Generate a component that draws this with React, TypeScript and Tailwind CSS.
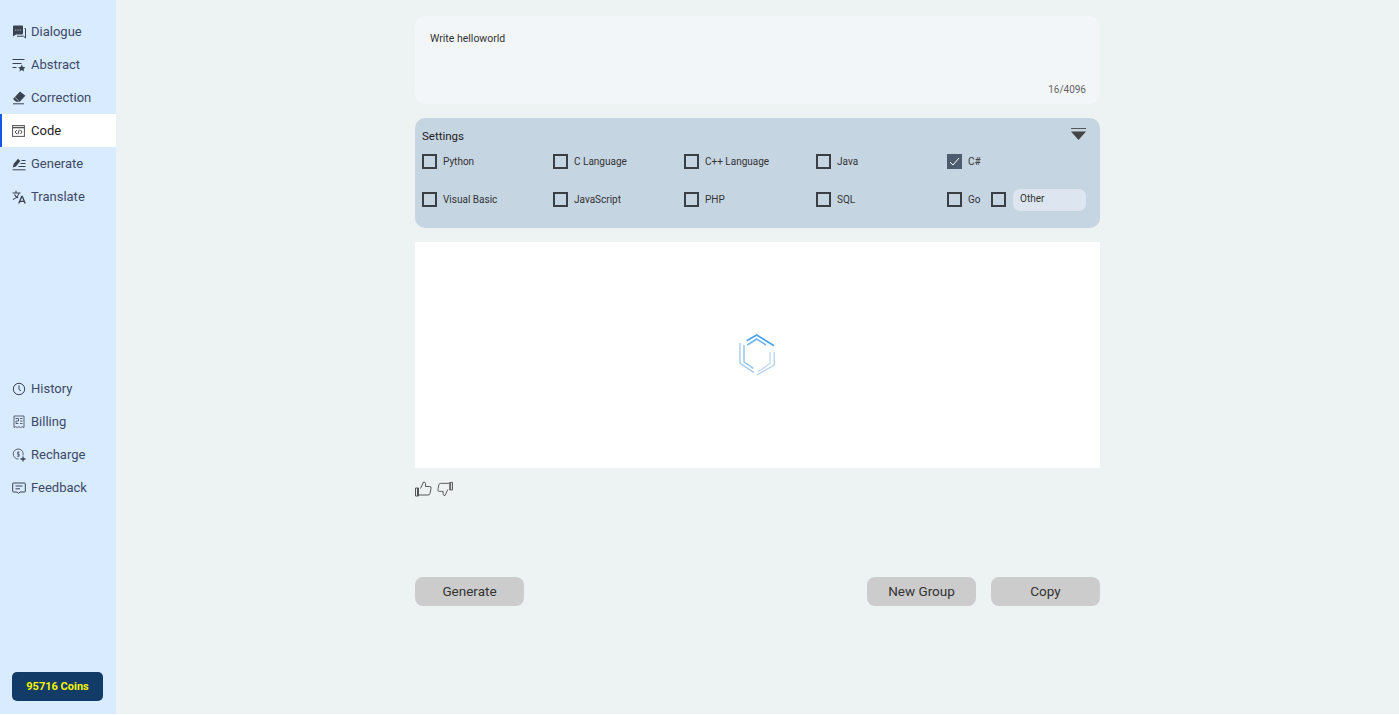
import React from "react";

const font = { fontFamily: 'Roboto, "Noto Sans", sans-serif' };

const c = "#3a4250";
const Dialogue = () => (
  <svg width="14" height="14" viewBox="0 0 14 14">
    <path d="M1 1.500a1 1 0 0 1 1-1h8a1 1 0 0 1 1 1v7a1 1 0 0 1-1 1H4L1 11.500z" fill={c} />
    <path d="M12.500 3.500h1V13l-2-1.800H5" fill="none" stroke={c} strokeWidth="1" />
    <circle cx="3.800" cy="5" r=".6" fill="#d9ebfe" /><circle cx="6" cy="5" r=".6" fill="#d9ebfe" /><circle cx="8.200" cy="5" r=".6" fill="#d9ebfe" />
  </svg>
);
const Abstract = () => (
  <svg width="14" height="14" viewBox="0 0 14 14">
    <path d="M.5 1.500h12M.5 5.500h9M.5 9.500h4" stroke={c} strokeWidth="1.100" fill="none" />
    <path d="M9.800 6.600l1.100 2.300 2.600.3-1.900 1.700.5 2.500-2.300-1.300-2.300 1.300.5-2.500-1.900-1.700 2.600-.3z" fill={c} />
  </svg>
);
const Eraser = () => (
  <svg width="14" height="14" viewBox="0 0 14 14">
    <path d="M8 .6l5.400 4.200-5.700 5.900H4L1 8z" fill={c} />
    <path d="M1 12.800h11" stroke={c} strokeWidth="1" />
    <path d="M3 6.400l3.800 3.400" stroke="#d9ebfe" strokeWidth=".6" />
  </svg>
);
const Code = () => (
  <svg width="14" height="14" viewBox="0 0 14 14" fill="none">
    <rect x=".6" y="1.600" width="11.800" height="10.800" stroke="#555" strokeWidth="1" />
    <path d="M.6 3.600H12.400" stroke="#555" strokeWidth="1.400" />
    <path d="M4.800 6L3.200 8 4.800 10M8.400 6L10 8 8.400 10M7.400 5.600L5.800 10.400" stroke="#333" strokeWidth=".9" />
  </svg>
);
const Generate = () => (
  <svg width="14" height="14" viewBox="0 0 14 14">
    <path d="M.8 10.500l.8-3.500L6 1.800l2.400 2.200L4 9.500z" fill={c} />
    <path d="M.5 12.800h13M8.500 6.500h5M6.500 9.500h7M9.500 3.500h4" stroke={c} strokeWidth="1" fill="none" />
  </svg>
);
const Translate = () => (
  <svg width="14" height="14" viewBox="0 0 14 14" fill="none" stroke={c} strokeWidth="1.100">
    <path d="M.5 3h8M4 .8V3M7 3c-.6 2.600-2.700 5-6 6.400M2.500 4.500c.8 1.800 2.200 3 3.700 3.600" />
    <path d="M6.800 13.500L9.700 6.500h.6l2.900 7M7.800 11.300h4.400" strokeWidth="1.300" />
  </svg>
);
const History = () => (
  <svg width="14" height="14" viewBox="0 0 14 14" fill="none" stroke={c} strokeWidth="1">
    <circle cx="7" cy="7" r="5.700" />
    <path d="M7 3.500v4l2 1.500" />
  </svg>
);
const Billing = () => (
  <svg width="14" height="14" viewBox="0 0 14 14" fill="none" stroke="#4a5260" strokeWidth=".9">
    <path d="M2 1h10v11.500l-1.600-.8-1.700.8-1.700-.8-1.700.8-1.700-.8-1.600.8z" />
    <path d="M3.500 3.500h3v2.500h-2.500v2.500h2.500M8 3.500h2.500M8 6h2.500M8 8.500h2.500" />
  </svg>
);
const Recharge = () => (
  <svg width="14" height="14" viewBox="0 0 14 14" fill="none" stroke="#4a5260" strokeWidth=".9">
    <path d="M11 7.500A5 5 0 1 0 6.500 11" />
    <path d="M7.500 4.200H5.500v2h1.800v2H5M6.300 3.200v6" strokeWidth=".7" />
    <path d="M11 8.500v5M8.500 11h5" strokeWidth="1.300" stroke={c} />
  </svg>
);
const Feedback = () => (
  <svg width="14" height="14" viewBox="0 0 14 14" fill="none" stroke={c} strokeWidth="1">
    <path d="M1.500 2h11a.8.8 0 0 1 .8.8v7.400a.8.8 0 0 1-.8.8H8l-1.500 1.500L5 11H1.500a.8.8 0 0 1-.8-.8V2.800a.8.8 0 0 1 .8-.8z" />
    <path d="M3.500 5h7M3.500 7.800h4.500" />
  </svg>
);

function NavItem({ icon, label, active }: { icon: React.ReactNode; label: string; active?: boolean }) {
  return (
    <div
      className={
        "flex h-[33px] items-center gap-[5px] border-l-2 pl-[10px] text-[13px] " +
        (active ? "border-[#1558e8] bg-white text-[#222]" : "border-transparent text-[#3c4a68]")
      }
    >
      <span className="flex w-[14px] justify-center">{icon}</span>
      <span className="pt-[1px]">{label}</span>
    </div>
  );
}

function Check({ label, checked }: { label?: string; checked?: boolean }) {
  return (
    <div className="flex items-center gap-[6px]">
      {checked ? (
        <span className="flex h-[15px] w-[15px] items-center justify-center bg-[#4e5c6f]">
          <svg width="13" height="13" viewBox="0 0 13 13" fill="none" stroke="#fff" strokeWidth="1">
            <path d="M2 7l3 3 6-7" />
          </svg>
        </span>
      ) : (
        <span className="h-[15px] w-[15px] border-2 border-[#3a3f45]" />
      )}
      {label && <span className="text-[10px] leading-[15px] text-[#333]">{label}</span>}
    </div>
  );
}

function Button({ children }: { children: React.ReactNode }) {
  return (
    <div className="flex h-[29px] w-[109px] items-center justify-center rounded-[8px] bg-[#cccccc] text-[13.500px] text-[#333]">
      {children}
    </div>
  );
}

export default function App() {
  return (
    <div style={font} className="flex h-[714px] w-[1399px] overflow-hidden bg-[#edf3f3]">
      <aside className="flex h-full w-[116px] shrink-0 flex-col justify-between bg-[#d9ebfe] pb-[13px] pt-[15px]">
        <div className="flex flex-col">
          <NavItem icon={<Dialogue />} label="Dialogue" />
          <NavItem icon={<Abstract />} label="Abstract" />
          <NavItem icon={<Eraser />} label="Correction" />
          <NavItem icon={<Code />} label="Code" active />
          <NavItem icon={<Generate />} label="Generate" />
          <NavItem icon={<Translate />} label="Translate" />
        </div>
        <div className="flex flex-col gap-[168px]">
          <div className="flex flex-col">
            <NavItem icon={<History />} label="History" />
            <NavItem icon={<Billing />} label="Billing" />
            <NavItem icon={<Recharge />} label="Recharge" />
            <NavItem icon={<Feedback />} label="Feedback" />
          </div>
          <div className="mx-[12px] flex h-[29px] w-[91px] items-center justify-center rounded-[5px] bg-[#133b68] pt-[2px] text-[11px] font-bold text-[#f5f500]">
            95716 Coins
          </div>
        </div>
      </aside>

      <main className="flex flex-1 justify-center pt-[16px]">
        <div className="flex w-[685px] flex-col">
          <div className="flex h-[88px] flex-col justify-between rounded-[10px] bg-[#f2f6f8] pb-[7px] pl-[15px] pr-[14px] pt-[15px]">
            <div className="text-[10.500px] leading-[15px] text-[#333]">Write helloworld</div>
            <div className="text-right text-[10px] leading-[15px] text-[#666]">16/4096</div>
          </div>

          <div className="mt-[14px] h-[110px] rounded-[10px] bg-[#c6d5e2] pl-[7px] pr-[14px] pt-[10px]">
            <div className="flex h-[16px] justify-between">
              <span className="text-[11.500px] leading-[16px] text-[#222]">Settings</span>
              <svg width="15" height="12" viewBox="0 0 15 12">
                <path d="M0 .5h15" stroke="#555" strokeWidth="1" />
                <path d="M0 3.500h15l-7.500 8.500z" fill="#444" />
              </svg>
            </div>
            <div className="mt-[10px] grid grid-cols-[131px_131px_132px_131px_1fr] gap-y-[19px]">
              <Check label="Python" />
              <Check label="C Language" />
              <Check label="C++ Language" />
              <Check label="Java" />
              <Check label="C#" checked />
              <Check label="Visual Basic" />
              <Check label="JavaScript" />
              <Check label="PHP" />
              <Check label="SQL" />
              <div className="flex items-center">
                <div className="w-[44px]">
                  <Check label="Go" />
                </div>
                <div className="flex items-center gap-[7px]">
                  <Check />
                  <div className="flex h-[22px] w-[73px] translate-y-px items-center rounded-[7px] bg-[#dde6f0] pb-[3px] pl-[7px] text-[10px] text-[#333]">
                    Other
                  </div>
                </div>
              </div>
            </div>
          </div>

          <div className="mt-[14px] flex h-[226px] items-center justify-center bg-white">
            <svg width="39" height="44" viewBox="0 0 39 44" fill="none">
              <path d="M8.700 7.700L18.700 2 36 12.700" stroke="#4aa3e8" strokeWidth="1.600" />
              <path d="M9.300 12L18.700 6 28 12" stroke="#6db7ee" strokeWidth="1.500" />
              <path d="M2 10V30.300L16 39.700" stroke="#a7cdec" strokeWidth="1.400" />
              <path d="M6 12V29L15.300 35.300" stroke="#8fc1ea" strokeWidth="1.400" />
              <path d="M36.300 18.700V32L18.700 42" stroke="#b8d6ef" strokeWidth="1.400" />
              <path d="M32 18.700V30.300L20.300 38.700" stroke="#c6ddf2" strokeWidth="1.400" />
            </svg>
          </div>

          <div className="mt-[12px] flex h-[18px] items-center gap-[5px]">
            <svg width="17" height="16" viewBox="0 0 17 16" fill="none" stroke="#555" strokeWidth="1">
              <path d="M.5 7h3v8h-3zM2.500 7v8M3.500 14h9.500a2 2 0 0 0 2-1.600l1-5a1.500 1.500 0 0 0-1.500-1.900H10.500V2.500A1.800 1.800 0 0 0 8.500 1L5.500 7.500" />
            </svg>
            <svg width="16" height="16" viewBox="0 0 17 16" fill="none" stroke="#555" strokeWidth="1">
              <path d="M16.500 9h-3V1h3zM14.500 9V1M13.500 2H4a2 2 0 0 0-2 1.600l-1 5A1.500 1.500 0 0 0 2.500 10.500H6.500v3A1.800 1.800 0 0 0 8.500 15l3-6.500" />
            </svg>
          </div>

          <div className="mt-[79px] flex items-center">
            <Button>Generate</Button>
            <div className="ml-auto flex gap-[15px]">
              <Button>New Group</Button>
              <Button>Copy</Button>
            </div>
          </div>
        </div>
      </main>
    </div>
  );
}
